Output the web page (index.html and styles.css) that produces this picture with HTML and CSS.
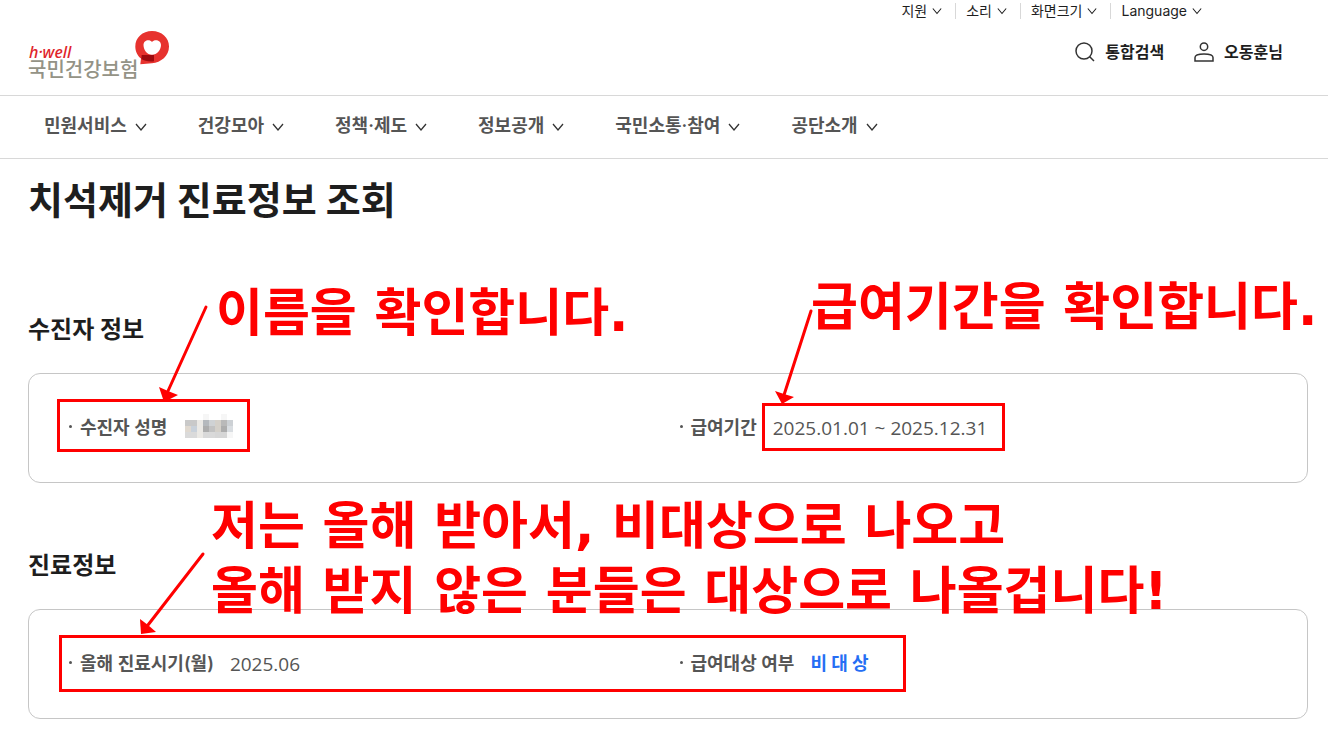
FILE: index.html
```html
<!DOCTYPE html>
<html lang="ko">
<head>
    <meta charset="UTF-8">
    <meta name="viewport" content="width=device-width, initial-scale=1.0">
    <title>치석제거 진료정보 조회</title>
    <link rel="stylesheet" href="styles.css">
</head>
<body>
    <!-- shared icons -->
    <svg class="sprite" aria-hidden="true">
        <symbol id="chevron" viewBox="0 0 12 8">
            <path d="M1 1l5 6 5-6" fill="none" stroke="currentColor" stroke-width="1.3"/>
        </symbol>
    </svg>

    <header class="header">
        <div class="util">
            <button type="button">지원 <svg><use href="#chevron"/></svg></button>
            <button type="button">소리 <svg><use href="#chevron"/></svg></button>
            <button type="button">화면크기 <svg><use href="#chevron"/></svg></button>
            <button type="button">Language <svg><use href="#chevron"/></svg></button>
        </div>
        <div class="header-main">
            <a class="logo" href="#">
                <span class="logo-text">
                    <em>h·well</em>
                    <span>국민건강보험</span>
                </span>
                <svg class="logo-mark" viewBox="0 0 34 34" aria-hidden="true">
                    <path d="M17 0C26.600 0 34 6.500 34 15.500C34 25 26 31.500 17 32.200L5.300 33.300L6 27.600C2.400 25 .3 20.500.3 15.600C.3 6.500 7.500 0 17 0Z" fill="#e7322e"/>
                    <path d="M17 11C15 8 8.500 8.500 8.500 14C8.500 19 12 23.700 17 23.700C22 23.700 26 19 26 14C26 8.500 19 8 17 11Z" fill="#fff"/>
                    <path d="M6.700 24H19V30.300C14 31 9 29.800 6.400 28Z" fill="#9d0a0e"/>
                </svg>
            </a>
            <div class="header-links">
                <a href="#">
                    <svg viewBox="0 0 20 20"><circle cx="9" cy="9" r="8"/><path d="M14.700 14.700L19 19"/></svg>
                    통합검색
                </a>
                <a href="#">
                    <svg viewBox="0 0 20 20"><circle cx="10" cy="4.700" r="3.700"/><path d="M1 19v-3.500C1 13 5 12 10 12s9 1 9 3.500V19z"/></svg>
                    오동훈님
                </a>
            </div>
        </div>
    </header>

    <nav class="gnb">
        <a href="#">민원서비스 <svg><use href="#chevron"/></svg></a>
        <a href="#">건강모아 <svg><use href="#chevron"/></svg></a>
        <a href="#">정책·제도 <svg><use href="#chevron"/></svg></a>
        <a href="#">정보공개 <svg><use href="#chevron"/></svg></a>
        <a href="#">국민소통·참여 <svg><use href="#chevron"/></svg></a>
        <a href="#">공단소개 <svg><use href="#chevron"/></svg></a>
    </nav>

    <main class="content">
        <h1>치석제거 진료정보 조회</h1>

        <section class="info">
            <h2>수진자 정보</h2>
            <dl class="panel">
                <div class="item">
                    <dt>수진자 성명</dt>
                    <dd>
                        <svg class="mosaic" viewBox="0 0 8 4" shape-rendering="crispEdges" role="img" aria-label="가려진 이름">
                            <path d="M0 1h2v1H0z" fill="#c9c9c9"/>
                            <path d="M0 2h1v1H0z" fill="#e0d9d0"/>
                            <path d="M1 2h1v1H1z" fill="#c9d1da"/>
                            <path d="M0 3h2v1H0z" fill="#dadada"/>
                            <path d="M2 1h1v3H2z" fill="#ebe9e5"/>
                            <path d="M3 1h1v1H3z" fill="#b5b9bd"/>
                            <path d="M4 1h1v1H4z" fill="#cfd2d4"/>
                            <path d="M3 2h1v1H3z" fill="#adadad"/>
                            <path d="M4 2h1v1H4z" fill="#c2c2c2"/>
                            <path d="M3 3h2v1H3z" fill="#d9d9d9"/>
                            <path d="M5 1h1v2H5z" fill="#d4d0c9"/>
                            <path d="M6 1h1v1H6z" fill="#b9b9b9"/>
                            <path d="M6 2h1v1H6z" fill="#adadad"/>
                            <path d="M7 1h1v1H7z" fill="#cdd1d5"/>
                            <path d="M7 2h1v1H7z" fill="#d9dde1"/>
                            <path d="M5 3h2v1H5z" fill="#d6d6d6"/>
                            <path d="M7 3h1v1H7zM3 0h1v1H3zM6 0h1v1H6z" fill="#f6f6f6"/>
                        </svg>
                    </dd>
                </div>
                <div class="item">
                    <dt>급여기간</dt>
                    <dd class="date">2025.01.01 ~ 2025.12.31</dd>
                </div>
            </dl>
        </section>

        <section class="info">
            <h2>진료정보</h2>
            <dl class="panel">
                <div class="item">
                    <dt>올해 진료시기(월)</dt>
                    <dd class="date">2025.06</dd>
                </div>
                <div class="item">
                    <dt>급여대상 여부</dt>
                    <dd class="result">비 대 상</dd>
                </div>
            </dl>
        </section>
    </main>

    <!-- red guide marks on top of the page -->
    <div class="guide">
        <div class="mark mark-name"></div>
        <div class="mark mark-period"></div>
        <div class="mark mark-result"></div>
        <svg class="arrows" viewBox="0 0 1328 735" aria-hidden="true">
            <g stroke="#f00" stroke-width="3" stroke-linecap="round">
                <path d="M206 307L168 391"/>
                <path d="M811 311L784 395"/>
                <path d="M203 554L148 625"/>
            </g>
            <g fill="#f00">
                <path d="M164 402L159 387L168 391L178 395Z"/>
                <path d="M782 404L775 391L784 394L794 397Z"/>
                <path d="M141 634L140 619L148 625L156 632Z"/>
            </g>
        </svg>
        <p class="note note-name">이름을 확인합니다.</p>
        <p class="note note-period">급여기간을 확인합니다.</p>
        <p class="note note-result">저는 올해 받아서, 비대상으로 나오고<br>올해 받지 않은 분들은 대상으로 나올겁니다!</p>
    </div>
</body>
</html>
```
FILE: styles.css
```css
:root {
    --text: #1e1e1e;
    --gray: #555;
    --line: #d8d8d8;
    --panel-line: #c6c6c6;
    --blue: #256ef4;
    --red: #f00;
}

* {
    margin: 0;
    padding: 0;
    box-sizing: border-box;
}

body {
    position: relative;
    background: #fff;
    color: var(--text);
    font-family: Inter, "Noto Sans CJK KR", sans-serif;
    font-size: 18px;
    line-height: 24px;
    overflow-x: hidden;
}

a {
    color: inherit;
    text-decoration: none;
}

.sprite {
    position: absolute;
    width: 0;
    height: 0;
}

/* header */
.header {
    height: 96px;
    border-bottom: 1px solid var(--line);
}

.util {
    display: flex;
    justify-content: flex-end;
    padding: 3px 126px 0 0;
}

.util button {
    display: flex;
    align-items: center;
    gap: 5px;
    height: 16px;
    padding: 0 13px 0 10px;
    border: 0;
    border-left: 1px solid var(--line);
    background: none;
    color: inherit;
    font: inherit;
    font-size: 14px;
    line-height: 16px;
    cursor: pointer;
}

.util button:first-child {
    border-left: 0;
}

.util button:last-child {
    padding-right: 0;
}

.util svg {
    width: 10px;
    height: 8px;
}

.header-main {
    display: flex;
    justify-content: space-between;
    padding: 12px 45px 0 28px;
}

.logo {
    display: flex;
    align-items: flex-start;
}

.logo-text {
    display: flex;
    flex-direction: column;
    padding-top: 13px;
    color: #949386;
    font-size: 20px;
    font-weight: 500;
    line-height: 20px;
}

.logo-text em {
    padding-left: 1px;
    color: #e0242b;
    font-family: "Noto Sans", sans-serif;
    font-size: 16px;
    line-height: 16px;
}

.logo-mark {
    width: 34px;
    height: 34px;
    margin-left: -3px;
}

.header-links {
    display: flex;
    gap: 30px;
    padding-top: 9px;
    font-size: 16px;
    font-weight: 700;
}

.header-links a {
    display: flex;
    align-items: center;
    gap: 10px;
    height: 24px;
}

.header-links svg {
    width: 20px;
    height: 20px;
    fill: none;
    stroke: #333;
    stroke-width: 1.5;
}

/* main menu */
.gnb {
    display: flex;
    align-items: center;
    gap: 51px;
    height: 63px;
    padding: 0 44px 2px;
    border-bottom: 1px solid var(--line);
    color: var(--gray);
    font-weight: 600;
}

.gnb a {
    display: flex;
    align-items: center;
    gap: 8px;
}

.gnb svg {
    width: 12px;
    height: 8px;
    margin-top: 2px;
    color: #333;
}

/* content */
.content {
    padding: 15px 20px 16px 28px;
}

h1 {
    margin-bottom: 86px;
    font-size: 38px;
    line-height: 52px;
}

h2 {
    margin-bottom: 25px;
    font-size: 24px;
    line-height: 36px;
}

.info + .info {
    margin-top: 65px;
}

.panel {
    display: grid;
    grid-template-columns: 1fr 1fr;
    align-items: center;
    height: 110px;
    padding: 0 17px 0 40px;
    border: 1px solid var(--panel-line);
    border-radius: 12px;
    color: var(--gray);
}

.item {
    display: flex;
    align-items: center;
    gap: 16px;
}

dt {
    display: flex;
    font-weight: 600;
}

dt::before {
    content: '';
    width: 3px;
    height: 3px;
    margin: 9px 8px 0 0;
    border-radius: 50%;
    background: var(--gray);
}

.date {
    font-family: "Open Sans", sans-serif;
    font-size: 19px;
}

.result {
    color: var(--blue);
    font-weight: 700;
}

.mosaic {
    display: block;
    width: 48px;
    height: 24px;
    margin: 0 0 4px 2px;
}

/* guide marks */
.guide {
    position: absolute;
    inset: 0;
    pointer-events: none;
}

.arrows {
    position: absolute;
    top: 0;
    left: 0;
    width: 1328px;
    height: 735px;
}

.mark {
    position: absolute;
    border: 3px solid var(--red);
}

.mark-name {
    top: 399px;
    left: 57px;
    width: 193px;
    height: 53px;
}

.mark-period {
    top: 403px;
    left: 762px;
    width: 243px;
    height: 48px;
}

.mark-result {
    top: 635px;
    left: 59px;
    width: 847px;
    height: 57px;
}

.note {
    position: absolute;
    color: var(--red);
    font-family: "DejaVu Sans", "Noto Sans CJK KR", sans-serif;
    font-size: 51px;
    font-weight: 700;
    line-height: 65px;
    white-space: nowrap;
}

.note-name {
    top: 281px;
    left: 216px;
}

.note-period {
    top: 275px;
    left: 811px;
}

.note-result {
    top: 494px;
    left: 211px;
}
```
